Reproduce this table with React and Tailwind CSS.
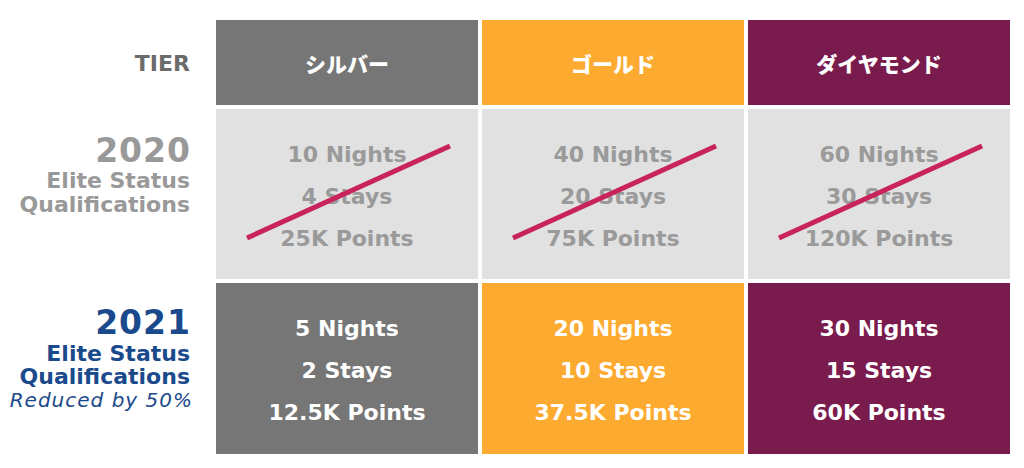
const TIERS = [
  { name: 'シルバー', bg: 'bg-[#767676]', old: ['10 Nights', '4 Stays', '25K Points'], now: ['5 Nights', '2 Stays', '12.5K Points'] },
  { name: 'ゴールド', bg: 'bg-[#fdaa31]', old: ['40 Nights', '20 Stays', '75K Points'], now: ['20 Nights', '10 Stays', '37.5K Points'] },
  { name: 'ダイヤモンド', bg: 'bg-[#7a1b4e]', old: ['60 Nights', '30 Stays', '120K Points'], now: ['30 Nights', '15 Stays', '60K Points'] },
];

const FONT = "font-['DejaVu_Sans','Noto_Sans_CJK_JP',sans-serif]";

function Strike() {
  return (
    <svg className="absolute inset-0 w-full h-full pointer-events-none" viewBox="0 0 262 170">
      <line x1="31" y1="129" x2="234" y2="37" stroke="#c8235a" strokeWidth="5" />
    </svg>
  );
}

export default function App() {
  return (
    <div className={`w-[1024px] h-[468px] bg-white pt-5 ${FONT}`}>
      {/* Header row */}
      <div className="flex">
        <div className="w-[190px] flex items-center justify-end pt-[2px] text-[22px] font-bold text-[#6b6b6b]">TIER</div>
        <div className="ml-[26px] grid grid-cols-[262px_262px_262px] gap-1">
          {TIERS.map((t) => (
            <div key={t.name} className={`${t.bg} h-[85px] flex items-center justify-center pt-[2px] text-white text-[21px] font-black font-['Noto_Sans_CJK_JP',sans-serif]`}>
              {t.name}
            </div>
          ))}
        </div>
      </div>

      {/* 2020 row */}
      <div className="flex mt-1">
        <div className="w-[190px] flex flex-col items-end pt-[22px] text-right text-[#999999] font-bold">
          <div className="text-[33px] leading-[40px] tracking-[1px] mr-[-1px]">2020</div>
          <div className="text-[22px] leading-[24px] -mt-[2px]">Elite Status</div>
          <div className="text-[22px] leading-[24px]">Qualifications</div>
        </div>
        <div className="ml-[26px] grid grid-cols-[262px_262px_262px] gap-1">
          {TIERS.map((t) => (
            <div key={t.name} className="relative bg-[#e1e1e1] h-[170px] flex flex-col items-center justify-center pt-[6px] text-[#9a9a9a] text-[22px] font-bold leading-[42px]">
              {t.old.map((l) => <div key={l}>{l}</div>)}
              <Strike />
            </div>
          ))}
        </div>
      </div>

      {/* 2021 row */}
      <div className="flex mt-1">
        <div className="w-[190px] flex flex-col items-end pt-[21px] text-right text-[#1b4a8c]">
          <div className="text-[33px] leading-[38px] font-bold tracking-[1px] mr-[-1px]">2021</div>
          <div className="text-[22px] leading-[23px] font-bold">Elite Status</div>
          <div className="text-[22px] leading-[23px] font-bold">Qualifications</div>
          <div className="text-[20px] leading-[24px] italic tracking-[1px] mr-[-3px]">Reduced by 50%</div>
        </div>
        <div className="ml-[26px] grid grid-cols-[262px_262px_262px] gap-1">
          {TIERS.map((t) => (
            <div key={t.name} className={`${t.bg} h-[171px] flex flex-col items-center justify-center pt-[4px] text-white text-[22px] font-bold leading-[42px]`}>
              {t.now.map((l) => <div key={l}>{l}</div>)}
            </div>
          ))}
        </div>
      </div>
    </div>
  );
}
